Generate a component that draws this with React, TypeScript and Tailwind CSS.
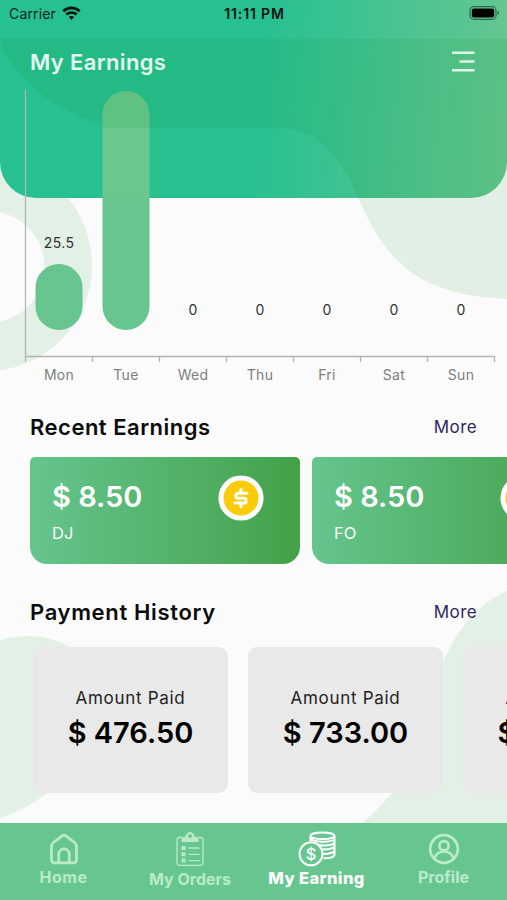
import React from 'react';

interface DayEarning {
    day: string;
    label: string;
    height: number;
}

const week: DayEarning[] = [
    { day: 'Mon', label: '25.5', height: 66 },
    { day: 'Tue', label: '', height: 239 },
    { day: 'Wed', label: '0', height: 0 },
    { day: 'Thu', label: '0', height: 0 },
    { day: 'Fri', label: '0', height: 0 },
    { day: 'Sat', label: '0', height: 0 },
    { day: 'Sun', label: '0', height: 0 },
];

const earnings = [
    { amount: '$ 8.50', name: 'DJ' },
    { amount: '$ 8.50', name: 'FO' },
];

const payments = ['$ 476.50', '$ 733.00', '$ 475.00'];

const BackdropShapes = () => (
    <svg className="absolute inset-0 pointer-events-none" width="507" height="900" viewBox="0 0 507 900">
        <g fill="#e2f0e5">
            <path fillRule="evenodd" d="M-120 265a106 106 0 1 0 212 0a106 106 0 1 0 -212 0ZM-68.500 267a56.500 56 0 1 1 113 0a56.500 56 0 1 1 -113 0Z" />
            <path d="M0 640Q30 632 54 640C90 651 98 684 96 720C93 757 72 779 46 794Q21 812 0 818Z" />
            <path d="M507 591C473 606 455 635 444 660C433 700 431 750 391 794Q377 811 362 823H507Z" />
        </g>
    </svg>
);

const BackdropWave = () => (
    <svg className="absolute inset-0 pointer-events-none" width="507" height="300" viewBox="0 0 507 300">
        <path
            d="M0 39H507V299C462 297 426 287 401 264C382 246 371 226 358 198C349 176 340 160 324 145C311 132 298 128 272 128H132C91 126 53 107 29 83C14 68 4 55 0 39Z"
            fill="#158e2d"
            fillOpacity="0.105"
        />
    </svg>
);

const StatusBar = () => (
    <div className="flex h-7 items-center justify-between pl-[9px] pr-[7px] text-[14px] text-[#06251b]">
        <div className="flex w-[160px] items-center gap-[6px] pb-[2px]">
            <span className="tracking-[0.15px]">Carrier</span>
            <svg width="19" height="15" viewBox="0 0 19 15" fill="none" stroke="#04140e" strokeWidth="2.600">
                <path d="M1.300 5.200C6 .8 13 .8 17.700 5.200" />
                <path d="M4.300 8.500C7.300 5.800 11.700 5.800 14.700 8.500" />
                <path d="M6.800 11L9.500 14L12.200 11C10.600 9.700 8.400 9.700 6.800 11Z" fill="#04140e" stroke="none" />
            </svg>
        </div>
        <span className="pb-[2px] font-semibold tracking-[0.85px] text-[#04140e]">11:11 PM</span>
        <div className="flex w-[160px] justify-end pb-[2px]">
            <svg width="31" height="14" viewBox="0 0 31 14">
                <rect x="1" y=".7" width="26" height="12.600" rx="3.800" fill="none" stroke="#2d6b4c" strokeWidth="1.200" />
                <rect x="2.800" y="2.500" width="22.400" height="9" rx="2" fill="#000" />
                <path d="M28.500 4.800C30.500 5.500 30.500 8.500 28.500 9.200Z" fill="#2d6b4c" />
            </svg>
        </div>
    </div>
);

const EarningsChart = () => (
    <svg className="block" width="507" height="300" viewBox="0 90 507 300" fontFamily="Inter, sans-serif" fontSize="14" textAnchor="middle">
        <defs>
            <linearGradient id="tallBar" gradientUnits="userSpaceOnUse" x1="0" y1="91" x2="0" y2="330">
                <stop offset="0.155" stopColor="#5fc283" />
                <stop offset="0.155" stopColor="#6ac78f" />
                <stop offset="0.45" stopColor="#6ac78f" />
                <stop offset="0.45" stopColor="#67c690" />
            </linearGradient>
        </defs>
        <path d="M25.500 90V362M25.500 356.500H495M92.500 356V362M159.500 356V362M226.500 356V362M293.500 356V362M360.500 356V362M427.500 356V362M494.500 356V362" fill="none" stroke="#b0b5b3" strokeWidth="1.300" />
        {week.map((item, index) => {
            const x = 59 + index * 67;
            return (
                <g key={item.day}>
                    {item.height > 0 && (
                        <rect
                            x={x - 23.5}
                            y={330 - item.height}
                            width="47"
                            height={item.height}
                            rx="23.500"
                            fill={index === 1 ? 'url(#tallBar)' : '#67c690'}
                        />
                    )}
                    <text x={x} y={item.height > 0 ? 248 : 314.5} fill="#333" letterSpacing={item.height > 0 ? 0.4 : 0}>{item.label}</text>
                    <text x={x} y="379.500" fill="#7d7f7e" letterSpacing="0.300">{item.day}</text>
                </g>
            );
        })}
    </svg>
);

const SectionTitle = ({ title, spacing }: { title: string; spacing: string }) => (
    <div className="flex h-8 items-center justify-between pl-[30px] pr-[30px]">
        <h2 className={`text-[22px] font-semibold text-[#0c0c0c] ${spacing}`}>{title}</h2>
        <a className="pt-[2px] text-[17px] tracking-[0.4px] text-[#30265e]">More</a>
    </div>
);

const CoinBadge = () => (
    <svg className="shrink-0" width="46" height="46" viewBox="0 0 46 46" fill="none">
        <circle cx="23" cy="23" r="22.600" fill="#fff" />
        <circle cx="23" cy="23" r="17.500" fill="#fbca08" />
        <path
            d="M29 18.300H20.300A2.450 2.450 0 0 0 20.300 23.200H25.700A2.450 2.450 0 0 1 25.700 28.100H17M23 14.500V18M23 28V31.700"
            stroke="#fff"
            strokeWidth="3"
            strokeLinecap="round"
            strokeLinejoin="round"
        />
    </svg>
);

const HomeIcon = () => (
    <svg width="30" height="32" viewBox="0 0 30 32" fill="none" stroke="currentColor" strokeWidth="2.700" strokeLinejoin="round">
        <path d="M2.500 13.200C2.500 11.500 3 10.700 4.200 9.700L13.100 2.900Q15 1.500 16.900 2.900L25.800 9.700C27 10.700 27.500 11.500 27.500 13.200V27Q27.500 29.800 24.700 29.800H5.300Q2.500 29.800 2.500 27Z" />
        <path d="M9.700 29V21.200A5.300 5.300 0 0 1 20.300 21.200V29" />
    </svg>
);

const OrdersIcon = () => (
    <svg width="30" height="36" viewBox="0 0 30 36" fill="none" stroke="currentColor" strokeWidth="1.300">
        <path d="M7 6.500H4.500Q2 6.500 2 9V31.500Q2 34.300 4.800 34.300H25.200Q28 34.300 28 31.500V9Q28 6.500 25.500 6.500H23" />
        <path fillRule="evenodd" d="M6.500 11V8.500Q6.500 5.500 10.500 5.500Q11.500 1 15 1T19.500 5.500Q23.500 5.500 23.500 8.500V11ZM15 3.300A1.900 1.900 0 1 0 15 7.100A1.900 1.900 0 1 0 15 3.300Z" fill="currentColor" stroke="none" />
        <path d="M6.500 15h4v4h-4zM6.500 21.300h4v4h-4zM6.500 27.600h4v4h-4z" fill="currentColor" stroke="none" />
        <path d="M13.500 17H24.500M13.500 23.300H24.500M13.500 29.600H24.500" />
    </svg>
);

const EarningIcon = () => (
    <svg width="38" height="36" viewBox="0 0 38 36" fill="none" stroke="currentColor" strokeWidth="2">
        <ellipse cx="24.500" cy="4.800" rx="12" ry="3.300" />
        <path d="M12.500 4.800V10M36.500 4.800V23.500C36.500 26 31.500 27.500 25.500 27.300" />
        <path d="M12.500 8C17 11.500 32 11.500 36.500 8.500M20 14C26 15 34 14.500 36.500 12M23.500 18.500C29 18.700 34.500 17.800 36.500 15.800M25 23C30 23 34.500 22 36.500 20" />
        <circle cx="13" cy="22.800" r="11.500" />
        <text x="13" y="28.800" textAnchor="middle" fontFamily="Inter, sans-serif" fontWeight="500" fontSize="16.500" fill="currentColor" stroke="none">$</text>
    </svg>
);

const ProfileIcon = () => (
    <svg width="32" height="32" viewBox="0 0 32 32" fill="none" stroke="currentColor" strokeWidth="2.700">
        <circle cx="16" cy="16" r="13.800" />
        <circle cx="16" cy="12.800" r="4.600" />
        <path d="M6.500 25.500C8 20.500 11.500 18.500 16 18.500S24 20.500 25.500 25.500" />
    </svg>
);

const App: React.FC = () => {
    return (
        <div className="relative h-[900px] w-[507px] overflow-hidden bg-[#fbfbfb] font-['Inter',sans-serif]">
            <BackdropShapes />
            <div className="absolute inset-x-0 top-0 h-[198px] rounded-b-[36px] bg-[linear-gradient(94deg,#26c091_0%,#26c091_50%,#67c690_100%)]" />
            <BackdropWave />

            <div className="relative flex h-full flex-col">
                <StatusBar />
                <header className="flex h-[62px] items-center justify-between pl-[30px] pr-[32px] pt-[6px]">
                    <h1 className="text-[22px] font-semibold text-[#e2fbee] tracking-[0.35px]">My Earnings</h1>
                    <svg width="23" height="22" viewBox="0 0 23 22" stroke="#def7e8" strokeWidth="2.500">
                        <path d="M0 1.700H22.500M7.500 10.500H22.500M0 19.200H22.500" />
                    </svg>
                </header>
                <EarningsChart />

                <div className="mt-[21px]">
                    <SectionTitle title="Recent Earnings" spacing="tracking-[0.5px]" />
                    <div className="mt-[14px] flex gap-3 pl-[30px]">
                        {earnings.map((item) => (
                            <div
                                key={item.name}
                                className="flex h-[107px] w-[270px] shrink-0 justify-between rounded-t-[5px] rounded-b-[17px] bg-linear-to-r from-[#65c58e] to-[#43a147] pl-[22px] pr-[36px] pt-[18px] text-white"
                            >
                                <div>
                                    <p className="text-[29px] leading-[43px] font-semibold">{item.amount}</p>
                                    <p className="text-[16.500px] leading-[30px]">{item.name}</p>
                                </div>
                                <CoinBadge />
                            </div>
                        ))}
                    </div>
                </div>

                <div className="mt-8">
                    <SectionTitle title="Payment History" spacing="tracking-[0.65px]" />
                    <div className="mt-[19px] flex gap-5 pl-[33px]">
                        {payments.map((amount) => (
                            <div key={amount} className="flex h-[146px] w-[195px] shrink-0 flex-col items-center rounded-[9px] bg-[#e9e9e9] pt-[36px] whitespace-nowrap">
                                <p className="text-[17px] leading-[30px] tracking-[0.7px] text-[#222]">Amount Paid</p>
                                <p className="text-[29px] leading-[39px] font-semibold text-black">{amount}</p>
                            </div>
                        ))}
                    </div>
                </div>

                <nav className="mt-auto flex h-[77px] bg-[#67c690] text-[#b9ebca]">
                    <div className="flex w-[127px] flex-col items-center pt-[10px]">
                        <HomeIcon />
                        <span className="text-[16px] leading-[24px] font-bold tracking-[0.5px]">Home</span>
                    </div>
                    <div className="flex w-[126px] flex-col items-center pt-[8px]">
                        <OrdersIcon />
                        <span className="text-[16px] leading-[24px] font-bold">My Orders</span>
                    </div>
                    <div className="flex w-[127px] flex-col items-center pt-[8px] text-white">
                        <EarningIcon />
                        <span className="text-[16.500px] leading-[23px] font-extrabold tracking-[0.4px]">My Earning</span>
                    </div>
                    <div className="flex w-[127px] flex-col items-center pt-[10px]">
                        <ProfileIcon />
                        <span className="text-[16px] leading-[24px] font-bold">Profile</span>
                    </div>
                </nav>
            </div>
        </div>
    );
};

export default App;
